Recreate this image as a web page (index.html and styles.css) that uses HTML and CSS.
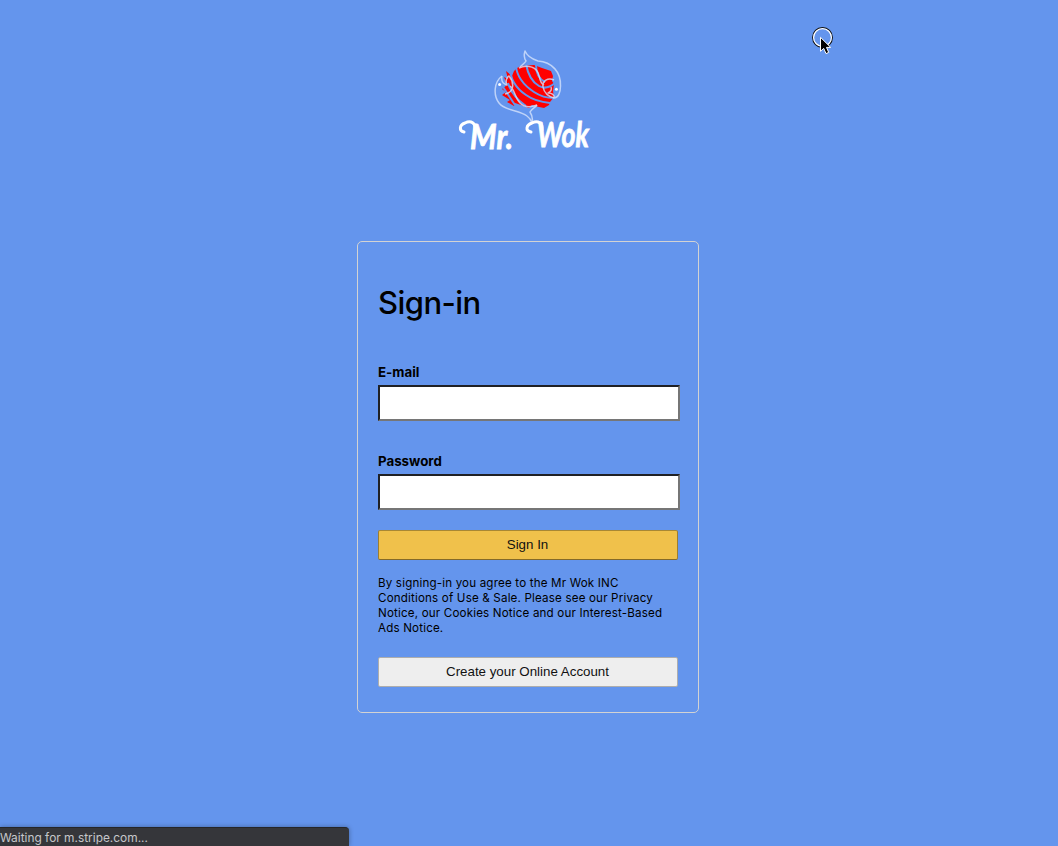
FILE: index.html
```html
<!DOCTYPE html>
<html lang="en">
<head>
<meta charset="utf-8">
<title>Mr. Wok - Sign-in</title>
<link rel="stylesheet" href="styles.css">
</head>
<body>
<main class="login">
  <svg class="logo" viewBox="0 0 150 120" role="img" aria-label="Mr. Wok">
    <g class="brush">
      <path d="M67 28L71 26L84 25L92 28L101 31L103 36L102 41L104 44L103 51L104 57L100 62L99 65L94 68L89 67L82 65L79 68L71 65L65 63L64 66L57 62L60 60L52 55L56 52L52 49L57 45L54 37L58 39L56 31L62 36L64 31Z"/>
    </g>
    <g class="gaps">
      <path d="M60 27C60 40 67 49 76 55C83 60 90 62 100 63"/>
      <path d="M66 26C67 38 75 46 84 52C90 56 96 58 104 58"/>
      <path d="M76 24C78 35 82 42 89 46C94 49 99 48 105 43"/>
      <path d="M86 25C86 34 89 39 95 42"/>
      <path d="M58 43C61 53 67 60 76 66"/>
      <path d="M53 47L65 65"/>
    </g>
    <g class="fish">
      <path d="M70 27C73 24 75 23 76 21C74 18 74 14 75 11C77 16 82 19 88 21C102 22 111 32 110.500 46C110.500 53 108 58 104 58C105 55 102 53 98 53C101 52 102 49 101 47"/>
      <path d="M104 40C98 37 92 41 93 47C94 53 99 57 104 58M69 28C75 25 84 26 87 31C91 36 88 42 94 45"/>
      <path d="M52 36C44 42 43 55 49 63C55 71 69 70 77 76C80 78 81 80 82 83C83 79 82 75 80 72C82 68 85 68 87 65"/>
      <path d="M52 36C51 41 53 44 57 45C55 41 57 37 59 36C64 42 65 52 55 54M60 46C65 50 65 58 70 63C75 68 82 67 87 65"/>
      <circle cx="49.600" cy="44.500" r="1.500"/><circle cx="106.400" cy="49.300" r="1.500"/>
    </g>
    <g class="flourish">
      <path d="M14 92C9 91 9 85 15 83C21 80 26 83 25 90"/>
      <path d="M81 92C75 91 76 85 82 83C88 80 93 83 92 90"/>
    </g>
    <text class="wordmark" x="20" y="109" textLength="43" lengthAdjust="spacingAndGlyphs">Mr.</text>
    <text class="wordmark" x="87" y="107" textLength="52" lengthAdjust="spacingAndGlyphs">Wok</text>
  </svg>
  <section class="card">
    <h1>Sign-in</h1>
    <form>
      <label for="email">E-mail</label>
      <input id="email" type="text">
      <label for="password">Password</label>
      <input id="password" type="password">
      <button class="signin" type="button">Sign In</button>
    </form>
    <p>By signing-in you agree to the Mr Wok INC Conditions of Use &amp; Sale. Please see our Privacy Notice, our Cookies Notice and our Interest-Based Ads Notice.</p>
    <button class="create" type="button">Create your Online Account</button>
  </section>
</main>
<div class="status">Waiting for m.stripe.com...</div>
<svg class="pointer" viewBox="0 0 28 32" aria-hidden="true">
  <circle cx="12.500" cy="12.500" r="9.900" fill="none" stroke="#111" stroke-width="1.100"/>
  <circle cx="12.500" cy="12.500" r="8.900" fill="none" stroke="#fff" stroke-width="1.200"/>
  <path d="M10.500 12.300V26.300L13.700 23.400L16 28.600L18.700 27.400L16.500 22.400H20.700Z" fill="#000" stroke="#fff" stroke-width="1"/>
</svg>
</body>
</html>
```
FILE: styles.css
```css
* { box-sizing: border-box; }
body {
  margin: 0;
  height: 846px;
  overflow: hidden;
  background: #6495ed;
  color: #000;
  font-family: Inter, "Liberation Sans", sans-serif;
}
.login {
  display: flex;
  flex-direction: column;
  align-items: center;
  padding: 40px 2px 0 0;
}
.logo {
  width: 150px;
  height: 120px;
  margin: 0 6px 81px 0;
  overflow: visible;
}
.brush { fill: #f00; }
.gaps { fill: none; stroke: #6495ed; stroke-width: 2; }
.fish { fill: none; stroke: #d5e2fb; stroke-width: 1.5; stroke-opacity: .8; stroke-linejoin: round; }
.fish circle { fill: #fff; stroke: none; }
.flourish { fill: none; stroke: #fff; stroke-width: 3; stroke-linecap: round; }
.wordmark {
  fill: #fff;
  stroke: #fff;
  stroke-width: .8;
  font: italic 700 34px Lato, sans-serif;
}
.card {
  width: 342px;
  height: 472px;
  padding: 41px 20px 0;
  border: 1px solid #d3d3d3;
  border-radius: 5px;
}
h1 {
  margin: 0 0 42px;
  font-size: 31px;
  line-height: 39px;
  font-weight: 500;
  letter-spacing: -.55px;
}
form { display: flex; flex-direction: column; }
label {
  margin-bottom: 5px;
  font-size: 13.3px;
  line-height: 16px;
  font-weight: 700;
}
input {
  width: 302px;
  height: 36px;
  margin: 0 0 32px;
  border: 2px solid;
  border-color: #202124 #767676 #767676 #202124;
  background: #fff;
}
#password { margin-bottom: 20px; }
button {
  display: block;
  width: 300px;
  height: 30px;
  padding: 0 1px 2px 0;
  border: 1px solid;
  border-radius: 2px;
  color: #111;
  font: 13.333px "Liberation Sans", Arial, sans-serif;
}
.signin { background: #f0c14b; border-color: #a88734 #9c7e31 #846a29; }
.create { background: #eee; border-color: #adadad; }
p {
  margin: 16px 0 21px;
  font-size: 11.6px;
  letter-spacing: .17px;
  line-height: 15px;
}
.status {
  position: absolute;
  left: 0;
  bottom: 0;
  width: 349px;
  height: 19px;
  border-top: 1px solid #252629;
  border-radius: 0 4px 0 0;
  background: #35363a;
  box-shadow: 0 0 5px #0005;
  color: #c5c7ca;
  font-size: 11.9px;
  line-height: 20px;
}
.pointer {
  position: absolute;
  left: 810px;
  top: 25px;
  width: 28px;
  height: 32px;
}
```
